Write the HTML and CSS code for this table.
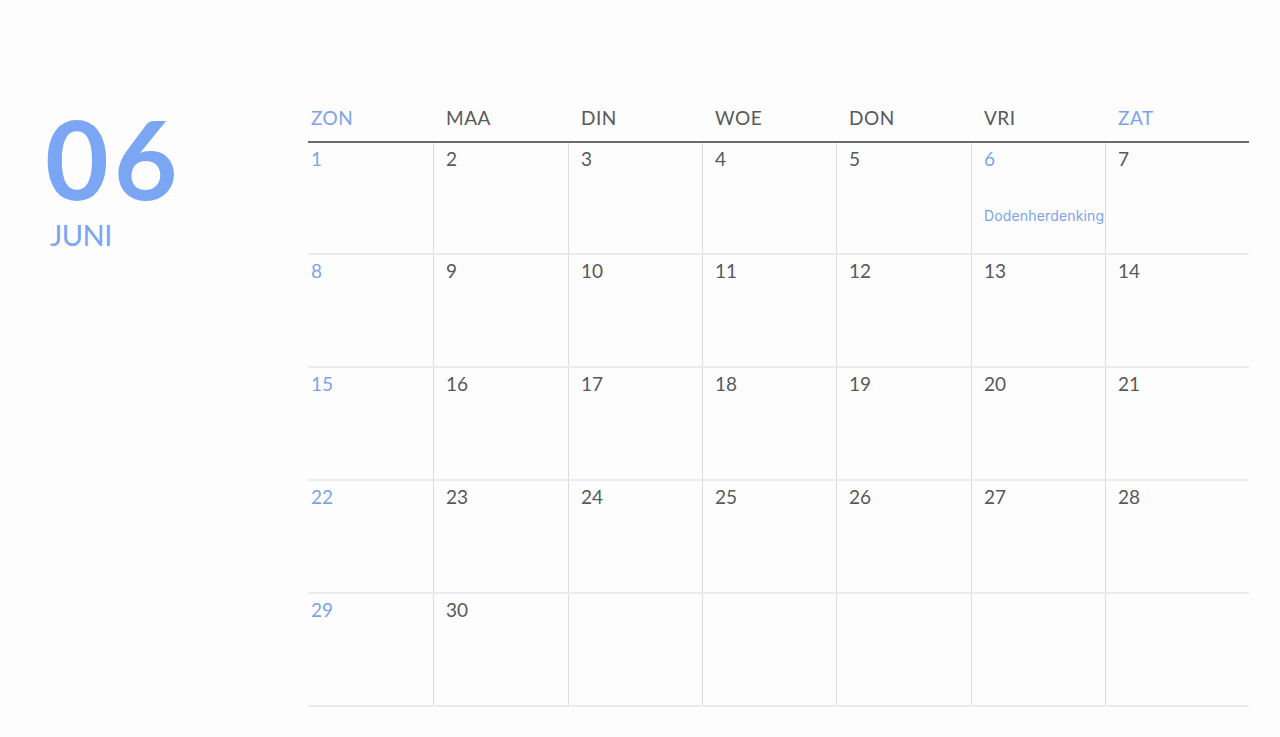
FILE: index.html
```html
<!DOCTYPE html>
<html lang="nl">
<head>
<meta charset="utf-8">
<title>Juni</title>
<link rel="stylesheet" href="styles.css">
</head>
<body>
<div class="page">
  <aside class="side">
    <div class="big">06</div>
    <div class="month">JUNI</div>
  </aside>
  <main class="cal">
    <div class="head">
      <div class="hd we">ZON</div>
      <div class="hd">MAA</div>
      <div class="hd">DIN</div>
      <div class="hd">WOE</div>
      <div class="hd">DON</div>
      <div class="hd">VRI</div>
      <div class="hd we">ZAT</div>
    </div>
    <div class="week first">
      <div class="cell we">1</div>
      <div class="cell">2</div>
      <div class="cell">3</div>
      <div class="cell">4</div>
      <div class="cell">5</div>
      <div class="cell we">6<div class="event">Dodenherdenking</div></div>
      <div class="cell">7</div>
    </div>
    <div class="week">
      <div class="cell we">8</div>
      <div class="cell">9</div>
      <div class="cell">10</div>
      <div class="cell">11</div>
      <div class="cell">12</div>
      <div class="cell">13</div>
      <div class="cell">14</div>
    </div>
    <div class="week">
      <div class="cell we">15</div>
      <div class="cell">16</div>
      <div class="cell">17</div>
      <div class="cell">18</div>
      <div class="cell">19</div>
      <div class="cell">20</div>
      <div class="cell">21</div>
    </div>
    <div class="week">
      <div class="cell we">22</div>
      <div class="cell">23</div>
      <div class="cell">24</div>
      <div class="cell">25</div>
      <div class="cell">26</div>
      <div class="cell">27</div>
      <div class="cell">28</div>
    </div>
    <div class="week">
      <div class="cell we">29</div>
      <div class="cell">30</div>
      <div class="cell"></div>
      <div class="cell"></div>
      <div class="cell"></div>
      <div class="cell"></div>
      <div class="cell"></div>
    </div>
  </main>
</div>
</body>
</html>
```
FILE: styles.css
```css
html, body {
  margin: 0;
  padding: 0;
  background: #fefdfe;
}
body {
  font-family: "Lato", "Noto Sans", sans-serif;
  color: #55595e;
}
.page {
  display: flex;
  padding-top: 104px;
}
.side {
  width: 308px;
  flex: none;
  box-sizing: border-box;
  padding-left: 45px;
  color: #7ba6f4;
}
.big {
  font-size: 110px;
  font-weight: 700;
  line-height: 110px;
  letter-spacing: 5px;
  margin-top: -2px;
}
.month {
  font-size: 29px;
  line-height: 30px;
  margin-top: 8px;
  padding-left: 5px;
  letter-spacing: -0.5px;
}
.cal {
  width: 941px;
  flex: none;
}
.head,
.week {
  display: grid;
  grid-template-columns: 125px 135px 134px 134px 135px 134px 144px;
}
.head {
  height: 37px;
  border-bottom: 2px solid #6b6b6e;
  box-sizing: content-box;
}
.hd {
  padding-left: 13px;
  padding-top: 3px;
  font-size: 19px;
  line-height: 22px;
  letter-spacing: 0.5px;
  color: #56595e;
}
.hd:first-child {
  padding-left: 3px;
}
.week {
  height: 113px;
  box-sizing: border-box;
  border-bottom: 2px solid #ebeaee;
}
.week.first {
  height: 112px;
}
.cell {
  padding: 5px 0 0 12px;
  font-size: 19px;
  line-height: 22px;
  border-left: 1px solid #dddce1;
}
.cell:first-child {
  border-left: none;
  padding-left: 3px;
}
.we {
  color: #7ca3ea;
}
.event {
  font-family: "Inter", "Noto Sans", sans-serif;
  font-size: 14px;
  line-height: 17px;
  margin-top: 37px;
  white-space: nowrap;
  letter-spacing: 0.15px;
  color: #7ca3ea;
}
```
